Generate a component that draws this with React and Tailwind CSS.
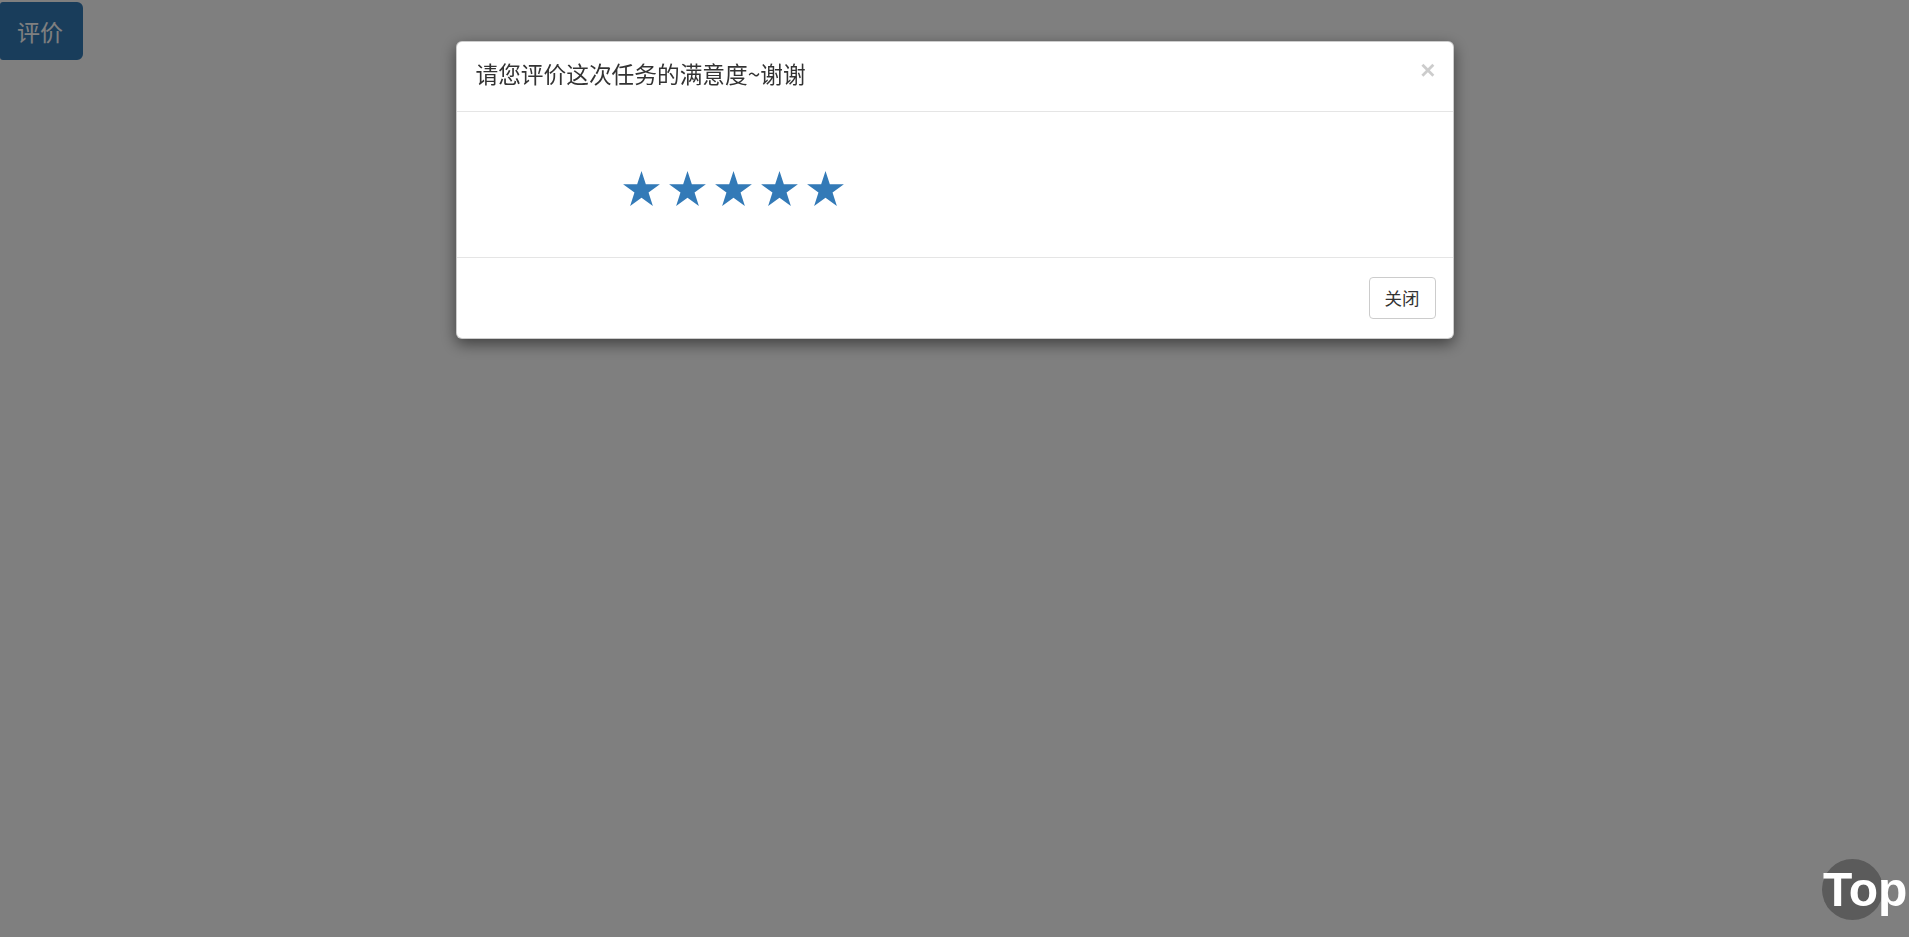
import React, { useState } from "react";

const cjk = "font-['Microsoft_YaHei','Noto_Sans_CJK_SC',sans-serif]";

function Star() {
  return (
    <svg
      viewBox="2.4 0 95.2 90.5"
      className="w-[37px] h-[35px] fill-[#337ab7]"
    >
      <polygon points="50,0 61.2,34.5 97.6,34.5 68.2,55.9 79.4,90.5 50,69.1 20.6,90.5 31.8,55.9 2.4,34.5 38.8,34.5" />
    </svg>
  );
}

function RatingModal({ onClose }) {
  return (
    <div className="fixed inset-0 z-20 flex justify-center">
      <div className="w-[998px] h-fit mt-[41px] bg-white border border-black/20 rounded-[6px] shadow-[0_5px_15px_rgba(0,0,0,0.5)]">
        {/* header */}
        <div className="h-[70px] border-b border-[#e5e5e5] flex justify-between items-start pl-[19px] pr-[17px] pt-[21px]">
          <h4 className={`${cjk} text-[22.7px] text-[#333] leading-none`}>
            请您评价这次任务的满意度~谢谢
          </h4>
          <button
            onClick={onClose}
            className="-mt-[6px] h-[24px] text-[26px] leading-none font-bold text-black/20 font-['Liberation_Sans',sans-serif]"
          >
            ×
          </button>
        </div>

        {/* body */}
        <div className="h-[145px] pl-[166px] pt-[59px]">
          <div className="flex gap-[9px]">
            {[1, 2, 3, 4, 5].map((n) => (
              <Star key={n} />
            ))}
          </div>
        </div>

        {/* footer */}
        <div className="h-[81px] border-t border-[#e5e5e5] flex justify-end items-center pr-[17px]">
          <button
            onClick={onClose}
            className={`${cjk} h-[42px] px-[15px] text-[17.5px] text-[#333] bg-white border border-[#ccc] rounded-[4px]`}
          >
            关闭
          </button>
        </div>
      </div>
    </div>
  );
}

export default function App() {
  const [open, setOpen] = useState(true);

  return (
    <div className="relative h-[937px] bg-white overflow-hidden">
      <button
        onClick={() => setOpen(true)}
        className={`${cjk} mt-[2px] w-[83px] h-[58px] pl-[17px] text-left bg-[#337ab7] text-white text-[23px] rounded-r-[6px] rounded-l-[3px]`}
      >
        评价
      </button>

      {open && (
        <>
          <div className="fixed inset-0 z-10 bg-black/50" />
          <RatingModal onClose={() => setOpen(false)} />
        </>
      )}

      {/* back to top */}
      <div className="fixed right-[26px] bottom-[17px] z-30 w-[61px] h-[61px] rounded-full bg-[#5b5b5b] flex items-center pl-[1px]">
        <span className="text-white text-[48px] font-bold leading-none whitespace-nowrap font-['Liberation_Sans',Arial,sans-serif]">
          Top
        </span>
      </div>
    </div>
  );
}
